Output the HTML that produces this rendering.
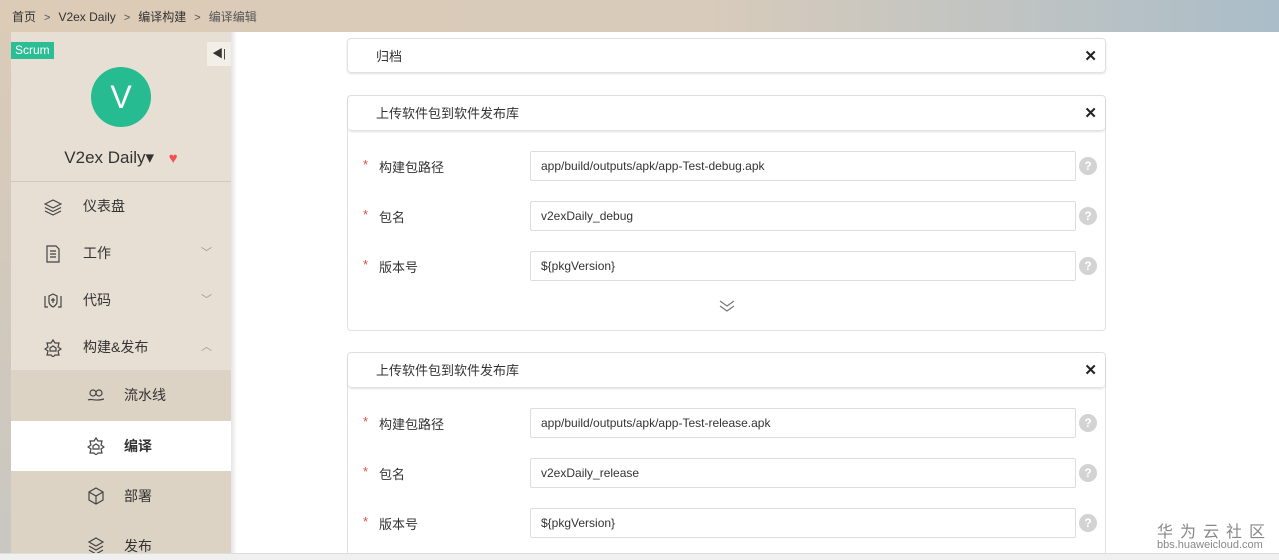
<!DOCTYPE html>
<html><head><meta charset="utf-8"><style>
*{box-sizing:border-box;margin:0;padding:0}
html,body{width:1279px;height:560px;overflow:hidden}
body{position:relative;font-family:"Liberation Sans","Noto Sans CJK SC",sans-serif;background:#fff;color:#333}
.top{position:absolute;left:0;top:0;width:1279px;height:32px;background:linear-gradient(90deg,#dccbb6 0%,#d8cbbb 55%,#aabdc9 100%);font-size:12px;line-height:34px;padding-left:12px;color:#333}
.top span{color:#555;margin:0 8px;font-size:11px}
.leftbg{position:absolute;left:0;top:32px;width:11px;height:528px;background:linear-gradient(180deg,#dacbb8,#c9c7c2)}
.side{position:absolute;left:11px;top:32px;width:220px;height:521px;background:#e7dfd3;overflow:hidden}
.scrum{position:absolute;left:0;top:10px;background:#2bbd93;color:#fff;font-size:12px;padding:1px 4px;line-height:15px}
.col{position:absolute;left:196px;top:10px;width:24px;height:24px;background:#f2eee8;font-size:11px;text-align:center;line-height:24px}
.av{position:absolute;left:80px;top:35px;width:60px;height:60px;border-radius:50%;background:#26bb91;color:#fff;font-size:32px;text-align:center;line-height:60px}
.name{position:absolute;left:0;width:220px;top:116px;text-align:center;font-size:17px;color:#333}
.name b{color:#f05050;font-size:15px;margin-left:10px}
.hr{position:absolute;left:0;top:149px;width:220px;border-top:1px solid #d2c9bc}
.item{position:absolute;left:0;width:220px;height:47px;font-size:14px;line-height:47px}
.item .ic{position:absolute;left:33px;top:15px;width:18px;height:18px}
.item .t{position:absolute;left:72px}
.item .ar{position:absolute;left:190px;top:0;color:#999;font-size:11px}
.sub{position:absolute;left:0;top:338px;width:220px;height:183px;background:#ddd3c4}
.sitem{position:absolute;left:0;width:220px;height:50px;font-size:14px;line-height:50px}
.sitem .ic{position:absolute;left:76px;top:16px;width:18px;height:18px}
.sitem .t{position:absolute;left:113px}
.act{background:#fff;font-weight:bold}
.shadow{position:absolute;left:231px;top:32px;width:6px;height:521px;background:linear-gradient(90deg,#e5e5e5,#fff)}
.card{position:absolute;left:347px;width:759px;border:1px solid #e1e1e1;border-radius:4px;background:#fff}
.hd{height:35px;line-height:35px;padding-left:28px;font-size:13px;border-bottom:1px solid #e1e1e1;border-radius:4px;box-shadow:0 1px 2px rgba(0,0,0,.12);position:relative}
.hd .x{position:absolute;right:8px;top:0;font-size:15px;font-weight:bold;color:#222}
.row{position:absolute;left:0;width:759px;height:30px;font-size:13px}
.row .st{position:absolute;left:15px;top:6px;color:#e74c3c;font-size:13px}
.row .l{position:absolute;left:31px;top:6px}
.row .in{position:absolute;left:182px;top:0;width:546px;height:30px;border:1px solid #ddd;border-radius:2px;font-size:12px;line-height:28px;padding-left:10px}
.row .q{position:absolute;left:731px;top:6px;width:18px;height:18px;border-radius:50%;background:#d3d3d3;color:#fff;font-size:12px;font-weight:bold;text-align:center;line-height:18px}
.bot{position:absolute;left:0;top:553px;width:1279px;height:7px;background:#f0f0f0;border-top:1px solid #ddd;z-index:5}
.wm{position:absolute;left:1157px;top:518px;color:#888;font-size:16px;letter-spacing:7px;z-index:6}
.wm2{position:absolute;left:1157px;top:539px;color:#888;font-size:11px;z-index:6}
</style></head><body>
<div class="top">首页<span>&gt;</span>V2ex Daily<span>&gt;</span>编译构建<span>&gt;</span><i style="font-style:normal;color:#555">编译编辑</i></div>
<div class="leftbg"></div>
<div class="side">
<div class="scrum">Scrum</div><div class="col">◀|</div>
<div class="av">V</div>
<div class="name">V2ex Daily▾ <b>♥</b></div>
<div class="hr"></div>
<div class="item" style="top:151px"><svg class="ic" viewBox="0 0 18 18" fill="none" stroke="#444" stroke-width="1.2"><path d="M9 2 17 6 9 10 1 6Z"/><path d="M1 9.5 9 13.5 17 9.5M1 13 9 17 17 13"/></svg><span class="t">仪表盘</span></div>
<div class="item" style="top:198px"><svg class="ic" viewBox="0 0 18 18" fill="none" stroke="#444" stroke-width="1.2"><path d="M3 1h9l3 3v13H3Z"/><path d="M6 6h6M6 9h6M6 12h6"/></svg><span class="t">工作</span><span class="ar">﹀</span></div>
<div class="item" style="top:245px"><svg class="ic" viewBox="0 0 18 18" fill="none" stroke="#444" stroke-width="1.2"><path d="M1 4v11h3M17 4v11h-3M5 4l4-2 4 2v6c0 3-4 5-4 5s-4-2-4-5Z"/><path d="M9 6v5M7 8h4"/></svg><span class="t">代码</span><span class="ar">﹀</span></div>
<div class="item" style="top:292px"><svg class="ic" viewBox="0 0 18 18" fill="none" stroke="#444" stroke-width="1.2"><path d="M9 1l2 3h4l-1 4 3 2-3 2 1 4h-4l-2 2-2-2H3l1-4-3-2 3-2-1-4h4Z"/><path d="M6 9l3-2 3 2v3H6Z"/></svg><span class="t">构建&amp;发布</span><span class="ar">︿</span></div>
<div class="sub">
<div class="sitem" style="top:0"><svg class="ic" viewBox="0 0 18 18" fill="none" stroke="#444" stroke-width="1.2"><circle cx="6" cy="7" r="3"/><circle cx="12" cy="7" r="3"/><path d="M1 14c4-2 6 2 16-1"/></svg><span class="t">流水线</span></div>
<div class="sitem act" style="top:51px"><svg class="ic" viewBox="0 0 18 18" fill="none" stroke="#444" stroke-width="1.2"><path d="M9 1l2 3h4l-1 4 3 2-3 2 1 4h-4l-2 2-2-2H3l1-4-3-2 3-2-1-4h4Z"/><path d="M6 9l3-2 3 2v3H6Z"/></svg><span class="t">编译</span></div>
<div class="sitem" style="top:101px"><svg class="ic" viewBox="0 0 18 18" fill="none" stroke="#444" stroke-width="1.2"><path d="M9 1l7 4v8l-7 4-7-4V5Z"/><path d="M2 5l7 4 7-4M9 9v8"/></svg><span class="t">部署</span></div>
<div class="sitem" style="top:151px"><svg class="ic" viewBox="0 0 18 18" fill="none" stroke="#444" stroke-width="1.2"><path d="M9 1l7 4-7 4-7-4ZM2 9l7 4 7-4M2 13l7 4 7-4"/></svg><span class="t">发布</span></div>
</div>
</div>
<div class="shadow"></div>
<div class="card" style="top:38px;height:35px;border:none"><div class="hd" style="border:1px solid #e1e1e1">归档<span class="x">✕</span></div></div>
<div class="card" style="top:95px;height:236px"><div class="hd">上传软件包到软件发布库<span class="x">✕</span></div>
<div class="row" style="top:55px"><span class="st">*</span><span class="l">构建包路径</span><div class="in">app/build/outputs/apk/app-Test-debug.apk</div><div class="q">?</div></div>
<div class="row" style="top:105px"><span class="st">*</span><span class="l">包名</span><div class="in">v2exDaily_debug</div><div class="q">?</div></div>
<div class="row" style="top:155px"><span class="st">*</span><span class="l">版本号</span><div class="in">${pkgVersion}</div><div class="q">?</div></div>
<svg style="position:absolute;left:371px;top:204px" width="16" height="12" viewBox="0 0 16 12" fill="none" stroke="#777" stroke-width="1.2"><path d="M1 1l7 5 7-5M1 6l7 5 7-5"/></svg>
</div>
<div class="card" style="top:352px;height:205px"><div class="hd">上传软件包到软件发布库<span class="x">✕</span></div>
<div class="row" style="top:55px"><span class="st">*</span><span class="l">构建包路径</span><div class="in">app/build/outputs/apk/app-Test-release.apk</div><div class="q">?</div></div>
<div class="row" style="top:105px"><span class="st">*</span><span class="l">包名</span><div class="in">v2exDaily_release</div><div class="q">?</div></div>
<div class="row" style="top:155px"><span class="st">*</span><span class="l">版本号</span><div class="in">${pkgVersion}</div><div class="q">?</div></div>
</div>
<div class="wm">华为云社区</div><div class="wm2">bbs.huaweicloud.com</div>
<div class="bot"></div>
</body></html>
